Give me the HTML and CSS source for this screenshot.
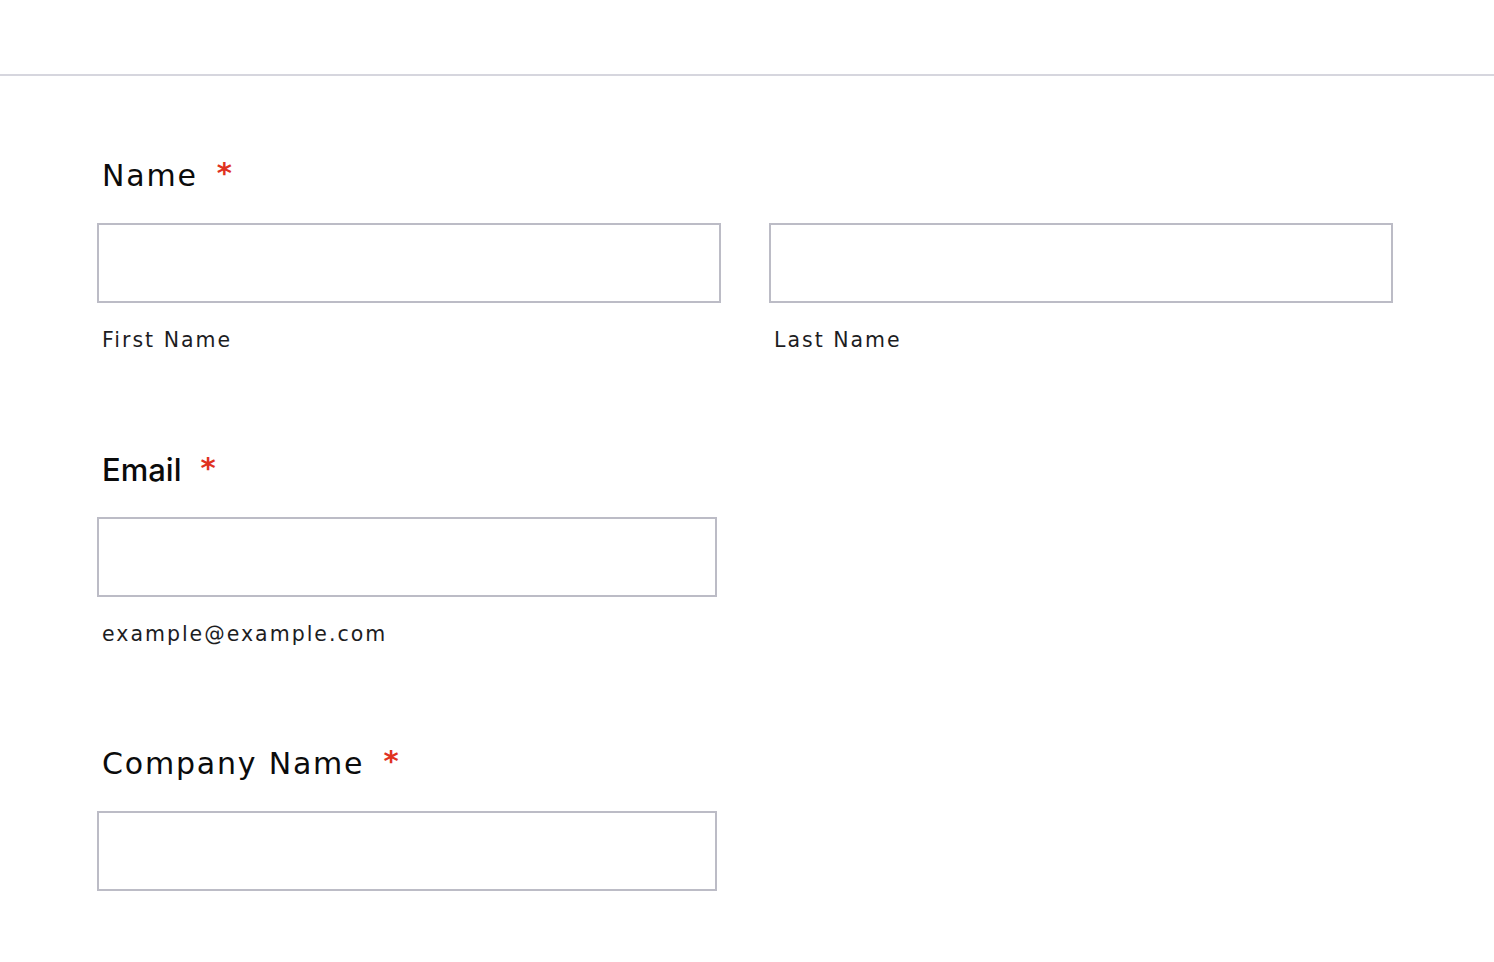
FILE: index.html
```html
<!DOCTYPE html>
<html lang="en">
<head>
  <meta charset="UTF-8">
  <meta name="viewport" content="width=device-width, initial-scale=1.0">
  <title>Contact Form</title>
  <link rel="stylesheet" href="styles.css">
</head>
<body>

<header class="top-bar"></header>

<form class="form">
  <div class="field">
    <label class="field-label">Name<span class="required">*</span></label>
    <div class="field-row">
      <div class="field-col">
        <input type="text" id="firstName" class="text-input wide">
        <label for="firstName" class="sub-label">First Name</label>
      </div>
      <div class="field-col">
        <input type="text" id="lastName" class="text-input wide">
        <label for="lastName" class="sub-label">Last Name</label>
      </div>
    </div>
  </div>

  <div class="field">
    <label for="email" class="field-label alt">Email<span class="required">*</span></label>
    <input type="email" id="email" class="text-input">
    <label for="email" class="sub-label">example@example.com</label>
  </div>

  <div class="field">
    <label for="company" class="field-label">Company Name<span class="required">*</span></label>
    <input type="text" id="company" class="text-input">
  </div>
</form>

</body>
</html>
```

FILE: styles.css
```css
:root {
  --text-color: #0b0b0b;
  --sub-color: #1d1d1f;
  --border-color: #bcbcc6;
  --line-color: #d6d6de;
  --required: #e0321f;
}

* {
  box-sizing: border-box;
}

body {
  margin: 0;
  padding: 0;
  background: #fff;
  font-family: 'DejaVu Sans', sans-serif;
  color: var(--text-color);
}

.top-bar {
  height: 76px;
  border-bottom: 2px solid var(--line-color);
}

.form {
  padding: 82px 0 0 97px;
}

.field {
  margin-bottom: 100px;
}

.field-label {
  display: block;
  font-size: 30px;
  line-height: 36px;
  padding-left: 5px;
  letter-spacing: 1.8px;
}

.field-label.alt {
  font-family: 'Inter', sans-serif;
  font-weight: 500;
  font-size: 31px;
  letter-spacing: 0;
}

/* red star after required labels */
.required {
  color: var(--required);
  font-size: 29px;
  font-weight: 700;
  line-height: 0;
  margin-left: 19px;
  vertical-align: 3px;
  letter-spacing: 0;
}

.field-label.alt .required {
  font-family: 'DejaVu Sans', sans-serif;
  margin-left: 19px;
}

.field-row {
  display: flex;
  gap: 48px;
}

.text-input {
  display: block;
  width: 620px;
  height: 80px;
  margin-top: 29px;
  border: 2px solid var(--border-color);
  border-radius: 0;
  background: #fff;
  padding: 0 14px;
  font-size: 20px;
}

.text-input.wide {
  width: 624px;
}

.sub-label {
  display: block;
  margin-top: 25px;
  padding-left: 5px;
  font-size: 20.5px;
  line-height: 24px;
  letter-spacing: 2px;
  color: var(--sub-color);
}
```
